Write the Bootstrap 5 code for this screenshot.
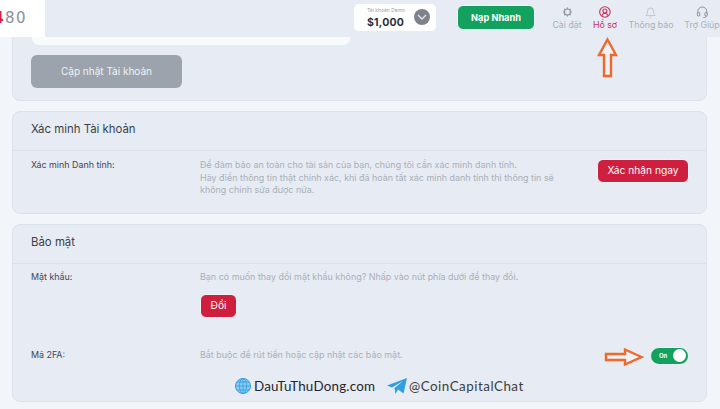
<!DOCTYPE html>
<html lang="vi">
<head>
    <meta charset="UTF-8">
    <meta name="viewport" content="width=device-width, initial-scale=1.0">
    <title>Hồ sơ</title>
    <link href="https://cdn.jsdelivr.net/npm/bootstrap@5.3.2/dist/css/bootstrap.min.css" rel="stylesheet">
    <style>
        :root {
            --panel: #e7ebf3;
            --line: #dde2ea;
            --muted: #a9afb9;
            --dark: #3b3f49;
            --red: #cf1f3f;
            --green: #12a15e;
            --orange: #f0682a;
        }

        body {
            margin: 0;
            height: 409px;
            overflow: hidden;
            position: relative;
            font-family: Inter, "Liberation Sans", sans-serif;
            background: #f2f6fa;
            color: var(--dark);
        }

        /* Thanh trên cùng */
        .top-bar {
            position: absolute;
            top: 0;
            left: 0;
            right: 0;
            height: 37px;
            background: var(--panel);
            z-index: 5;
        }
        .logo-box {
            width: 45px;
            background: #fff;
            overflow: hidden;
            padding-right: 18px;
            font-family: "DejaVu Sans", sans-serif;
            font-size: 15px;
            letter-spacing: 1.4px;
            color: #8a9099;
        }
        .logo-box b { color: #d8203f; font-weight: 700; }
        .balance-box {
            width: 82px;
            height: 27px;
            margin: 4px 0 0 309px;
            background: #fff;
            border-radius: 5px;
            padding-left: 13px;
        }
        .balance-label { font-size: 5px; line-height: 7px; color: #9a9fa8; padding-top: 3px; height: 10px; box-sizing: content-box; }
        .balance-value { font-size: 10.5px; line-height: 13px; font-weight: 700; color: #2b2f38; letter-spacing: .2px; margin-top: -1px; }
        .balance-btn {
            width: 16px;
            height: 16px;
            border-radius: 50%;
            background: #7f818b;
            margin: 5px 6px 0 0;
        }
        .deposit-btn {
            width: 78px;
            height: 25px;
            margin: 5px 0 0 21px;
            padding: 0;
            font-size: 9.2px;
            font-weight: 700;
            color: #fff;
            background: var(--green);
            border: 1px solid #f2f6fa;
            border-radius: 6px;
        }
        .nav-tile {
            font-size: 8.8px;
            line-height: 11px;
            color: var(--muted);
            text-align: center;
            white-space: nowrap;
            position: absolute;
            top: 5px;
            transform: translateX(-50%);
        }
        .nav-tile svg { display: block; margin: 1px auto 1px; }
        .nav-tile.active { color: #c9305a; }

        /* Nội dung */
        .page-wrap {
            padding: 0 13px 0 12px;
        }
        .panel-box {
            background: var(--panel);
            border: 1px solid var(--line);
            border-radius: 8px;
            margin-bottom: 10px;
        }
        .panel-head {
            height: 39px;
            padding: 0 18px 2px;
            font-size: 11.4px;
            border-bottom: 1px solid var(--line);
        }
        .first-panel {
            height: 101px;
            border-top: 0;
            border-radius: 0 0 8px 8px;
            padding: 0 18px;
        }
        .white-field {
            width: 318px;
            height: 45px;
            background: #f8fafc;
            border-radius: 0 0 7px 7px;
            margin-left: 1px;
        }
        .update-btn {
            width: 151px;
            height: 33px;
            margin-top: 10px;
            padding: 0;
            font-size: 10px;
            color: #f1f3f6;
            background: #9ca3ad;
            border: 0;
            border-radius: 6px;
        }
        .info-row {
            display: flex;
            padding: 0 17px 0 18px;
        }
        .info-label {
            width: 169px;
            flex: none;
            font-size: 8.9px;
            line-height: 12.5px;
            color: #43464f;
        }
        .info-text {
            flex: 1;
            font-size: 8.95px;
            line-height: 12.5px;
            color: var(--muted);
        }
        .red-btn {
            padding: 0;
            height: 24px;
            font-size: 10.2px;
            color: #fff;
            background: var(--red);
            border: 1px solid #f2f6fa;
            border-radius: 6px;
        }
        .switch-on {
            width: 39px;
            height: 18px;
            border-radius: 9px;
            background: var(--green);
            border: 1px solid #f2f6fa;
            color: #fff;
            font-size: 6px;
            font-weight: 700;
            padding: 0 2px 0 8px;
        }
        .switch-on i { width: 13px; height: 13px; border-radius: 50%; background: #fff; }

        /* Mũi tên và chữ đè lên ảnh */
        .over-item { position: absolute; z-index: 6; }
        .mark-text {
            font-family: Lato, "Liberation Sans", sans-serif;
            font-size: 13.4px;
            line-height: 18px;
            color: #23262e;
            letter-spacing: .2px;
            white-space: nowrap;
        }
    </style>
</head>
<body>

    <header class="top-bar d-flex">
        <div class="logo-box d-flex justify-content-end align-items-center flex-shrink-0"><span class="text-nowrap"><b>4</b>80</span></div>
        <div class="balance-box d-flex justify-content-between flex-shrink-0">
            <div>
                <div class="balance-label text-nowrap">Tài khoản Demo</div>
                <div class="balance-value">$1,000</div>
            </div>
            <div class="balance-btn d-flex align-items-center justify-content-center">
                <svg width="10" height="6" viewBox="0 0 10 6"><path d="M1 1l4 4 4-4" fill="none" stroke="#e7e8ec" stroke-width="1.3"/></svg>
            </div>
        </div>
        <button class="btn deposit-btn flex-shrink-0" type="button">Nạp Nhanh</button>

        <a class="nav-tile text-decoration-none" style="left:567px">
            <svg width="12" height="12" viewBox="0 0 24 24" fill="none" stroke="#8b9099" stroke-width="2.2"><circle cx="12" cy="12" r="6"/><path d="M12 3v3M12 18v3M3 12h3M18 12h3M5.600 5.600l2.200 2.200M16.200 16.200l2.200 2.200M5.600 18.400l2.200-2.200M16.200 7.800l2.200-2.200"/></svg>
            Cài đặt
        </a>
        <a class="nav-tile active text-decoration-none" style="left:605px">
            <svg width="12" height="12" viewBox="0 0 24 24" fill="none" stroke="#c9305a" stroke-width="2.2"><circle cx="12" cy="12" r="10.500"/><circle cx="12" cy="10" r="4"/><path d="M6 19.500c1-3.500 3-5 6-5s5 1.500 6 5"/></svg>
            Hồ sơ
        </a>
        <a class="nav-tile text-decoration-none" style="left:651px">
            <svg width="12" height="12" viewBox="0 0 24 24" fill="none" stroke="#b9bec7" stroke-width="1.6"><path d="M3 19c2-2 3-4 3-9a6 6 0 0 1 12 0c0 5 1 7 3 9z"/><path d="M10 22h4"/></svg>
            Thông báo
        </a>
        <a class="nav-tile text-decoration-none" style="left:702px">
            <svg width="12" height="12" viewBox="0 0 24 24" fill="none" stroke="#8b9099" stroke-width="2"><path d="M3 15v-4a9 9 0 0 1 18 0v4"/><rect x="2" y="13" width="5" height="7" rx="2"/><rect x="17" y="13" width="5" height="7" rx="2"/><path d="M20 20c0 2-2 3-6 3"/></svg>
            Trợ Giúp
        </a>
    </header>

    <main class="page-wrap">
        <section class="panel-box first-panel">
            <div class="white-field"></div>
            <button class="btn update-btn d-block" type="button">Cập nhật Tài khoản</button>
        </section>

        <section class="panel-box" style="height:103px">
            <div class="panel-head d-flex align-items-center">Xác minh Tài khoản</div>
            <div class="info-row pt-2">
                <div class="info-label">Xác minh Danh tính:</div>
                <div class="info-text">Để đảm bảo an toàn cho tài sản của bạn, chúng tôi cần xác minh danh tính.<br>Hãy điền thông tin thật chính xác, khi đã hoàn tất xác minh danh tính thì thông tin sẽ<br>không chỉnh sửa được nữa.</div>
                <button class="btn red-btn flex-shrink-0" style="width:92px" type="button">Xác nhận ngay</button>
            </div>
        </section>

        <section class="panel-box" style="height:178px">
            <div class="panel-head d-flex align-items-center">Bảo mật</div>
            <div class="info-row" style="padding-top:7px">
                <div class="info-label">Mật khẩu:</div>
                <div class="info-text">
                    Bạn có muốn thay đổi mật khẩu không? Nhấp vào nút phía dưới để thay đổi.
                    <button class="btn red-btn d-block" style="width:37px;margin-top:10px" type="button">Đổi</button>
                </div>
            </div>
            <div class="info-row align-items-center" style="margin-top:29px">
                <div class="info-label">Mã 2FA:</div>
                <div class="info-text">Bắt buộc để rút tiền hoặc cập nhật các bảo mật.</div>
                <div class="switch-on d-flex align-items-center justify-content-between"><span>On</span><i></i></div>
            </div>
        </section>
    </main>

    <!-- Mũi tên -->
    <svg class="over-item" style="left:596px;top:37px" width="23" height="41" viewBox="0 0 23 41">
        <path d="M11.500 2.500L20 18h-5v21H8V18H3z" fill="#eef1f6" stroke="#f0682a" stroke-width="2.400"/>
    </svg>
    <svg class="over-item" style="left:604px;top:347px" width="40" height="20" viewBox="0 0 40 20">
        <path d="M37.500 10L21 2.500v4.500H2v6h19v4.500z" fill="#eef1f6" stroke="#f0682a" stroke-width="2.400"/>
    </svg>

    <!-- Watermark -->
    <svg class="over-item" style="left:235px;top:378px" width="16" height="16" viewBox="0 0 16 16" fill="none" stroke="#2f9fe0" stroke-width=".8">
        <circle cx="8" cy="8" r="7.500" fill="#8ccbef" stroke-width="1"/>
        <ellipse cx="8" cy="8" rx="3.500" ry="7.500"/>
        <path d="M8 .5v15M.5 8h15M1.800 4h12.400M1.800 12h12.400"/>
    </svg>
    <div class="over-item mark-text" style="left:254px;top:377px">DauTuThuDong.com</div>
    <svg class="over-item" style="left:387px;top:378px" width="20" height="16" viewBox="0 0 20 16">
        <path d="M0 7.500L20 0 16.500 15.500 11 11.500 8.500 16 7.500 10 16 3 5 9.500z" fill="#2f9fe0"/>
    </svg>
    <div class="over-item mark-text" style="left:409px;top:377px;color:#3a3d45;letter-spacing:.5px">@CoinCapitalChat</div>

    <script src="https://cdn.jsdelivr.net/npm/bootstrap@5.3.2/dist/js/bootstrap.bundle.min.js"></script>
</body>
</html>
